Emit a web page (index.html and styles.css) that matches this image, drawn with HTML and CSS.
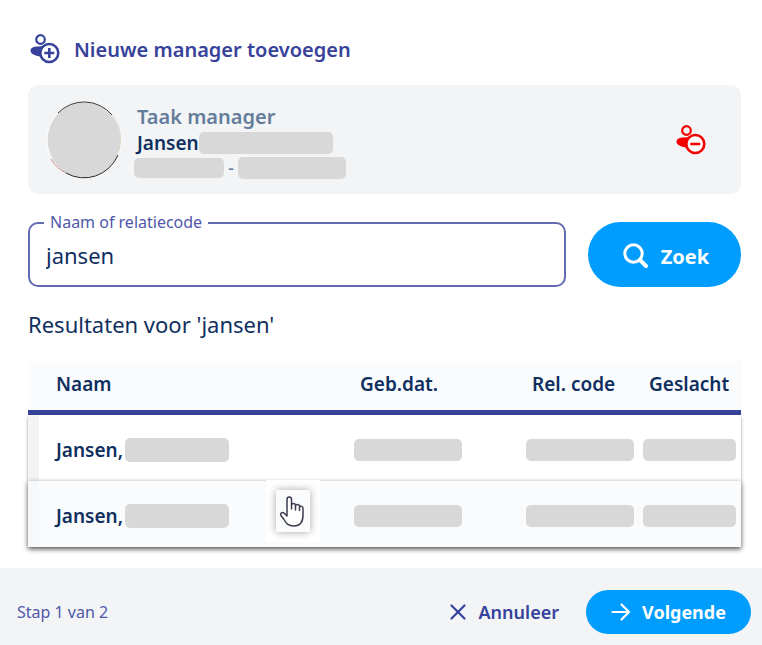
FILE: index.html
```html
<!doctype html>
<html lang="nl">

<head>
<meta charset="utf-8">
<title>Nieuwe manager toevoegen</title>
<meta content="width=device-width, initial-scale=1" name="viewport">
<link rel="stylesheet" href="styles.css">
</head>

<body>

<main class="content">
	<h1 class="title">
		<svg class="icon-person" viewBox="0 0 30 30" aria-hidden="true">
			<circle cx="10.500" cy="5.500" r="4.300" fill="none" stroke="currentColor" stroke-width="2.200"/>
			<path d="M0.500 16.500C0.500 13.500 4 12.600 8 12.400L15 12V22.500C8 22.800 0.500 21 0.500 16.500Z" fill="currentColor"/>
			<circle class="badge-bg" cx="19.300" cy="19" r="9" stroke="currentColor" stroke-width="2.600"/>
			<path d="M14.300 19h10M19.300 14v10" stroke="currentColor" stroke-width="2.600"/>
		</svg>
		Nieuwe manager toevoegen
	</h1>

	<section class="card">
		<svg class="avatar" viewBox="0 0 76 78" aria-hidden="true">
			<ellipse cx="38" cy="39" rx="37" ry="38" fill="#d8d8d8" stroke="#fff"/>
			<path d="M12 12A37 38 0 0 1 66 14" fill="none" stroke="#3b3633"/>
			<path d="M66 14A37 38 0 0 1 73 50" fill="none" stroke="#dcd9c8"/>
			<path d="M72 54A37 38 0 0 1 20 72" fill="none" stroke="#262626"/>
			<path d="M20 72A37 38 0 0 1 5 58" fill="none" stroke="#c08a80"/>
		</svg>
		<div class="person">
			<h2>Taak manager</h2>
			<div class="person-name">Jansen<span class="mask mask-person"></span></div>
			<div class="person-info"><span class="mask mask-date"></span>-<span class="mask mask-code"></span></div>
		</div>
		<button type="button" class="remove" aria-label="Verwijder manager">
			<svg class="icon-person" viewBox="0 0 30 30" aria-hidden="true">
				<circle cx="10.500" cy="5.500" r="4.300" fill="none" stroke="currentColor" stroke-width="2.200"/>
				<path d="M0.500 16.500C0.500 13.500 4 12.600 8 12.400L15 12V22.500C8 22.800 0.500 21 0.500 16.500Z" fill="currentColor"/>
				<circle class="badge-bg" cx="19.300" cy="19" r="9" stroke="currentColor" stroke-width="2.600"/>
				<path d="M14.300 19h10" stroke="currentColor" stroke-width="2.600"/>
			</svg>
		</button>
	</section>

	<form class="search">
		<div class="field">
			<label for="naam">Naam of relatiecode</label>
			<input type="text" id="naam" name="naam" value="jansen">
		</div>
		<button type="button" class="btn btn-search">
			<svg class="icon-search" viewBox="0 0 26 26" aria-hidden="true">
				<circle cx="10.500" cy="10.500" r="8.700" fill="none" stroke="currentColor" stroke-width="3"/>
				<path d="M17 17l6 6" stroke="currentColor" stroke-width="4" stroke-linecap="round"/>
			</svg>
			Zoek
		</button>
	</form>

	<p class="results">Resultaten voor 'jansen'</p>

	<table>
		<thead>
			<tr>
				<th>Naam</th>
				<th class="col-date">Geb.dat.</th>
				<th class="col-code">Rel. code</th>
				<th class="col-last">Geslacht</th>
			</tr>
		</thead>
		<tbody>
			<tr>
				<td><div class="name">Jansen,<span class="mask mask-name"></span></div></td>
				<td><span class="mask mask-cell"></span></td>
				<td><span class="mask mask-cell"></span></td>
				<td><span class="mask mask-last"></span></td>
			</tr>
			<tr class="hover">
				<td>
					<div class="name">Jansen,<span class="mask mask-name"></span></div>
					<div class="pointer">
						<svg viewBox="0 0 34 42" aria-hidden="true">
							<path d="M11 25V9.500C11 6.200 15.500 6.200 15.500 9.500V19V15C16 13 19.500 13 19.500 15.500V20V16C20 14 23.500 14 23.500 16.500V20.500V17.500C24 15.500 27 15.500 27 18.500V25C27 32 24 36 18 36C12 36 10 33 8 29.500L5 25.500C3.500 23 6.500 21.500 8.500 23.500L11 26Z" fill="#fff" stroke="#3c3c50" stroke-width="1.500" stroke-linejoin="round"/>
						</svg>
					</div>
				</td>
				<td><span class="mask mask-cell"></span></td>
				<td><span class="mask mask-cell"></span></td>
				<td><span class="mask mask-last"></span></td>
			</tr>
		</tbody>
	</table>
</main>

<footer>
	<span class="step">Stap 1 van 2</span>
	<button type="button" class="btn-cancel">
		<svg class="icon-close" viewBox="0 0 16 16" aria-hidden="true">
			<path d="M1.500 1.500l13 13M14.500 1.500l-13 13" stroke="currentColor" stroke-width="2.200" stroke-linecap="round"/>
		</svg>
		Annuleer
	</button>
	<button type="button" class="btn btn-next">
		<svg class="icon-arrow" viewBox="0 0 20 18" aria-hidden="true">
			<path d="M1.500 9h16M10.500 1.500L18 9l-7.500 7.500" fill="none" stroke="currentColor" stroke-width="2.200" stroke-linecap="round" stroke-linejoin="round"/>
		</svg>
		Volgende
	</button>
</footer>

</body>
</html>
```
FILE: styles.css
```css
* {
	box-sizing: border-box;
}
body {
	margin: 0;
	min-height: 100vh;
	display: flex;
	flex-direction: column;
	background: #fff;
	color: #0f2f5f;
	font-family: "Noto Sans", "Open Sans", sans-serif;
	font-size: 19px;
}
button {
	font-family: inherit;
	border: 0;
	padding: 0;
	cursor: pointer;
}
.content {
	flex: 1;
	padding: 32px 21px 20px 28px;
}

.title {
	display: flex;
	align-items: center;
	gap: 14px;
	height: 34px;
	margin: 0 0 19px;
	padding-left: 2px;
	color: #37429b;
	font-size: 20px;
	font-weight: 600;
}
.icon-person {
	display: block;
	width: 30px;
	height: 30px;
}
.badge-bg {
	fill: #fff;
}

.card {
	display: flex;
	align-items: center;
	height: 109px;
	padding: 0 35px 0 18px;
	border-radius: 10px;
	background: #f2f4f6;
}
.avatar {
	width: 76px;
	height: 78px;
}
.person {
	flex: 1;
	padding: 4px 0 0 12px;
}
.person h2 {
	margin: 0;
	padding-left: 3px;
	color: #647d9b;
	font-size: 20px;
	font-weight: 600;
	line-height: 28px;
}
.person-name {
	display: flex;
	align-items: center;
	padding-left: 3px;
	font-weight: 600;
	line-height: 25px;
}
.person-info {
	display: flex;
	align-items: center;
	gap: 4px;
	line-height: 25px;
	color: #647d9b;
}
.remove {
	background: none;
	color: #f50000;
}

.mask {
	display: block;
	height: 22px;
	border-radius: 5px;
	background: #d8d8d8;
}
.mask-person { width: 134px; }
.mask-date { width: 90px; height: 20px; }
.mask-code { width: 108px; }
.mask-name { width: 104px; height: 24px; }
.mask-cell { width: 108px; }
.mask-last { width: 93px; }

.search {
	display: flex;
	gap: 22px;
	margin: 28px 0 20px;
}
.field {
	position: relative;
	flex: 1;
}
.field label {
	position: absolute;
	left: 16px;
	top: -12px;
	padding: 0 6px;
	background: #fff;
	color: #4f58a8;
	font-size: 16px;
	line-height: 24px;
}
.field input {
	display: block;
	width: 100%;
	height: 65px;
	padding: 0 16px;
	border: 2px solid #636bb2;
	border-radius: 10px;
	outline: 0;
	color: inherit;
	font-family: inherit;
	font-size: 22px;
}
.btn {
	display: flex;
	align-items: center;
	justify-content: center;
	border-radius: 33px;
	background: #009dff;
	color: #fff;
	font-weight: 700;
}
.btn-search {
	gap: 12px;
	width: 153px;
	height: 65px;
	padding: 3px 0 0 3px;
	font-size: 20px;
}
.icon-search {
	width: 26px;
	height: 26px;
}

.results {
	margin: 0 0 20px;
	font-size: 22px;
	line-height: 34px;
}

table {
	width: 100%;
	table-layout: fixed;
	border-collapse: separate;
	border-spacing: 0;
}
th {
	height: 54px;
	padding: 0 0 4px 6px;
	border-bottom: 5px solid #37429b;
	background: #fafbfd;
	text-align: left;
	font-weight: 600;
}
td {
	height: 66px;
	padding: 4px 0 0;
}
th:first-child,
td:first-child {
	padding-left: 28px;
}
td:first-child {
	border-left: 11px solid #f2f4f6;
	padding-left: 17px;
}
.col-date { width: 172px; }
.col-code { width: 117px; }
.col-last { width: 98px; }
tbody tr {
	position: relative;
	box-shadow: 0 2px 3px rgba(0, 0, 0, .4);
}
.hover {
	background: #fafbfd;
	box-shadow: 0 2px 5px rgba(0, 0, 0, .7);
}
.hover td:first-child {
	border-left-color: #f6f8fa;
}
.name {
	display: flex;
	align-items: center;
	gap: 2px;
	font-weight: 600;
	line-height: 24px;
}
/* hand over the hovered row */
.pointer {
	position: absolute;
	left: 238px;
	top: -1px;
	padding: 10px;
	background: #fff;
}
.pointer svg {
	display: block;
	width: 34px;
	height: 42px;
	background: #fafbfd;
	box-shadow: 0 0 8px rgba(0, 0, 0, .35);
}

footer {
	display: flex;
	align-items: center;
	gap: 27px;
	height: 77px;
	padding: 11px 11px 0 17px;
	background: #f2f4f6;
	color: #37429b;
}
.step {
	flex: 1;
	color: #4f58a8;
	font-size: 16px;
}
.btn-cancel {
	display: flex;
	align-items: center;
	gap: 12px;
	background: none;
	color: #37429b;
	font-size: 18px;
	font-weight: 600;
}
.icon-close {
	width: 16px;
	height: 16px;
}
.btn-next {
	gap: 11px;
	width: 165px;
	height: 44px;
	font-size: 18px;
}
.icon-arrow {
	width: 20px;
	height: 18px;
}
```
